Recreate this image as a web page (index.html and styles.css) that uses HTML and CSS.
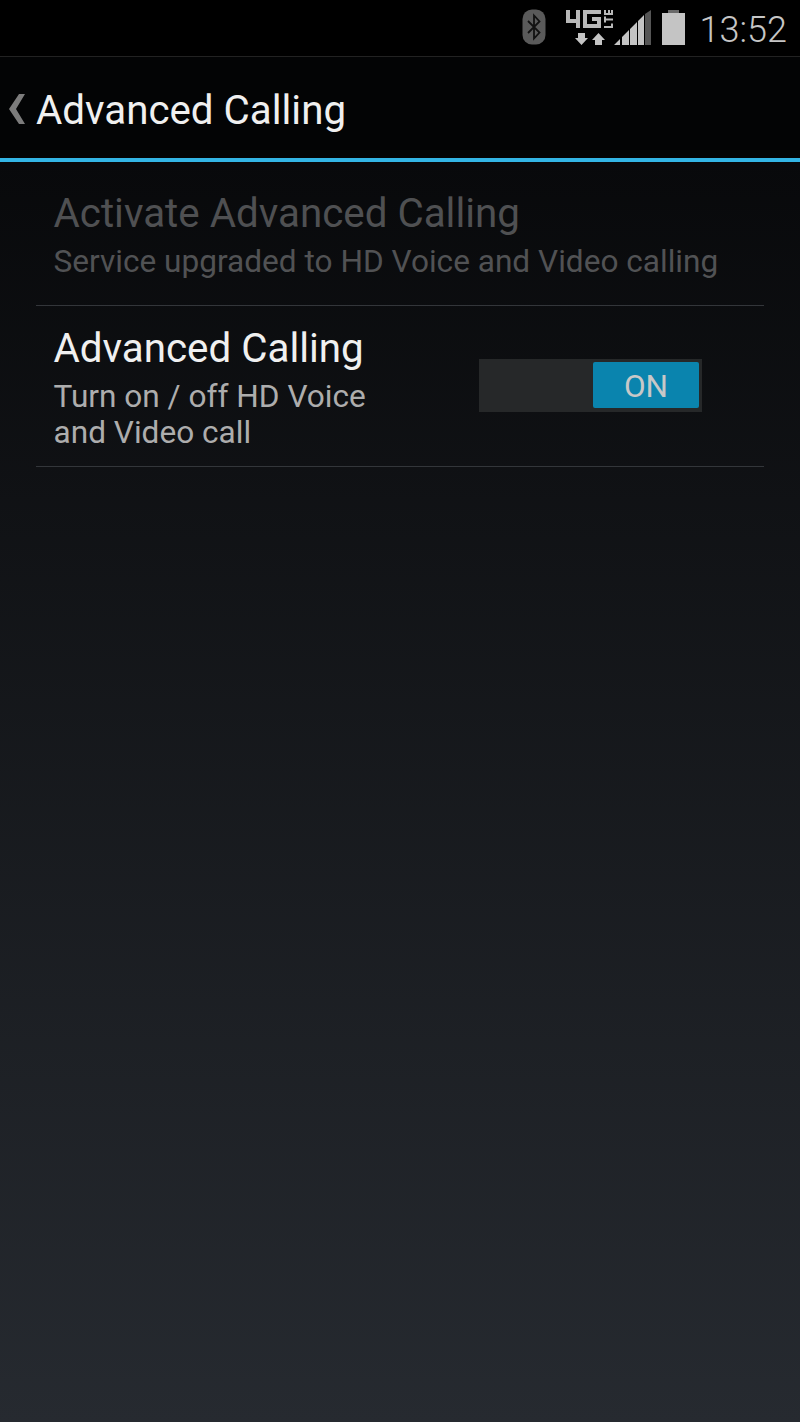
FILE: index.html
```html
<!DOCTYPE html>
<html lang="en">
<head>
<meta charset="utf-8">
<title>Advanced Calling</title>
<link rel="stylesheet" href="styles.css">
</head>
<body>
<div class="screen">
  <header class="status">
    <svg class="ic-bt" width="24" height="36" viewBox="0 0 24 36">
      <rect x="0.5" y="0.5" width="23" height="35" rx="9.5" fill="#5a5a5a"/>
      <path d="M6 12 L17.5 23.5 L12 29.5 V6.5 L17.5 12.5 L6 24" fill="none" stroke="#111" stroke-width="1.8"/>
    </svg>
    <svg class="ic-net" width="52" height="37" viewBox="0 0 52 37">
      <path d="M2 1 H6 V10 H12 V1 H16 V19 H12 V14 H2 Z" fill="#b8b8b8"/>
      <path d="M19 1 H37 V5 H23 V15 H33 V12 H28 V8 H37 V19 H19 Z" fill="#b8b8b8"/>
      <g fill="#b8b8b8">
        <rect x="40" y="4" width="9" height="2"/>
        <rect x="40" y="1" width="2" height="5"/>
        <rect x="44" y="1" width="2" height="5"/>
        <rect x="47" y="1" width="2" height="5"/>
        <rect x="40" y="9.5" width="9" height="2"/>
        <rect x="40" y="7.5" width="2" height="6"/>
        <rect x="40" y="17" width="9" height="2"/>
        <rect x="47" y="14.5" width="2" height="4.5"/>
      </g>
      <path d="M14 24 H21 V29 H24 L17.5 36 L11 29 H14 Z M31 36 H38 V31 H41 L34.5 24 L28 31 H31 Z" fill="#c4c4c4"/>
    </svg>
    <svg class="ic-signal" width="38" height="36" viewBox="0 0 38 36">
      <path d="M0 35 L6 29 V35 Z M8 35 V27 L15 20 V35 Z M16 35 V19 L23 12 V35 Z M24 35 V11 L30 5 V35 Z" fill="#c4c4c4"/>
      <path d="M31 35 V4 L37 0 V35 Z" fill="#555"/>
    </svg>
    <svg class="ic-batt" width="23" height="36" viewBox="0 0 23 36">
      <rect x="6" y="0" width="11" height="4" fill="#6a6a6a"/>
      <rect x="0" y="3" width="23" height="32" fill="#c4c4c4"/>
    </svg>
    <span class="clock">13:52</span>
  </header>

  <div class="actionbar">
    <svg class="back" width="18" height="32" viewBox="0 0 18 32">
      <path d="M11 1 H17 L8 16 L17 31 H11 L1 16 Z" fill="#7c7c7c"/>
    </svg>
    <h1 class="title">Advanced Calling</h1>
  </div>

  <main class="list">
    <section class="row row-disabled">
      <div class="row-text">
        <div class="row-title">Activate Advanced Calling</div>
        <div class="row-sub">Service upgraded to HD Voice and Video calling</div>
      </div>
    </section>
    <section class="row row-active">
      <div class="row-text narrow">
        <div class="row-title">Advanced Calling</div>
        <div class="row-sub">Turn on / off HD Voice<br>and Video call</div>
      </div>
      <div class="switch"><span class="thumb">ON</span></div>
    </section>
  </main>
</div>
</body>
</html>
```

FILE: styles.css
```css
* { box-sizing: border-box; }
html, body { margin: 0; padding: 0; background: #000; }
body { font-family: Roboto, "Liberation Sans", sans-serif; }

.screen {
  width: 800px;
  height: 1422px;
  display: flex;
  flex-direction: column;
  overflow: hidden;
}

.status {
  height: 57px;
  flex: none;
  background: #000;
  border-bottom: 1px solid #222;
  display: flex;
  align-items: flex-start;
  justify-content: flex-end;
  padding: 9px 13px 0 0;
}
.status svg { display: block; flex: none; }
.ic-bt { margin-right: 18px; }
.ic-net { margin-right: -2px; }
.ic-signal { margin-right: 10px; margin-top: 1px; }
.ic-batt { margin-right: 15px; margin-top: 1px; }
.clock {
  font-size: 36px;
  line-height: 42px;
  font-weight: 300;
  color: #c6c6c6;
}

.actionbar {
  height: 101px;
  flex: none;
  background: #030405;
  display: flex;
  align-items: center;
  padding-left: 8px;
}
.back { flex: none; margin-right: 10px; margin-top: 2px; }
.title {
  margin: 7px 0 0;
  font-size: 40.3px;
  line-height: 46px;
  font-weight: 400;
  color: #f0f0f0;
}

.list {
  flex: 1;
  border-top: 4px solid #33b5e5;
  background: linear-gradient(#08090b, #262a30);
  padding: 0 36px;
}

.row {
  display: flex;
  align-items: flex-start;
  padding: 29px 18px 0 17.5px;
  border-bottom: 1px solid #33363a;
}
.row-disabled { height: 144px; }
.row-active { height: 161px; padding-top: 20px; }

.row-title {
  font-size: 40.35px;
  line-height: 46px;
  color: #f0f0f0;
}
.row-sub {
  font-size: 31.6px;
  line-height: 36px;
  color: #adadad;
  margin-top: 7px;
}
.row-disabled .row-title { color: #4f5052; }
.row-disabled .row-sub { color: #515254; }
.narrow { width: 425.5px; flex: none; }

.switch {
  width: 223px;
  height: 53px;
  margin-top: 33px;
  background: #262829;
  padding: 3px;
  display: flex;
  justify-content: flex-end;
}
.thumb {
  width: 106px;
  height: 46px;
  border-radius: 2px;
  background: #0a84ae;
  color: #c8c8c8;
  font-size: 31.5px;
  line-height: 50px;
  text-align: center;
}
```
